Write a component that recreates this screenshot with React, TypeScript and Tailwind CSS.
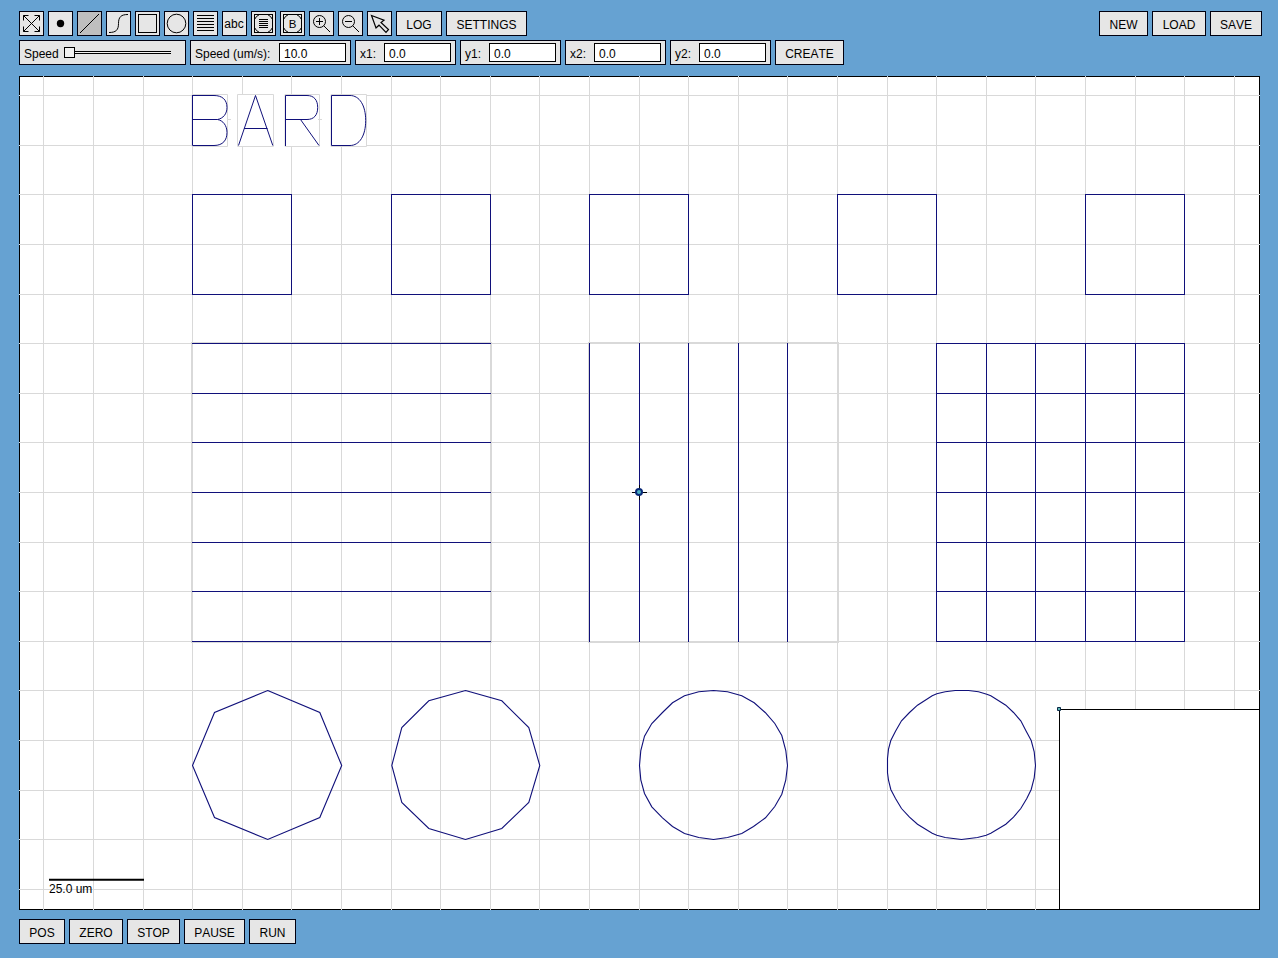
import type { ReactNode } from "react";

const INK = "#10107a";
const GRID = "#d9d9d9";

const gridX = [43, 93, 143, 192, 242, 291, 341, 391, 440, 490, 539, 589, 639, 688, 738, 787, 837, 887, 936, 986, 1035, 1085, 1135, 1184, 1234];
const gridY = [95, 145, 194, 244, 294, 343, 393, 442, 492, 542, 591, 641, 690, 740, 790, 839, 889];

const octagon = "267.7,690.5 319.8,712.5 341.7,765.5 319.8,817.5 267.7,839.5 214.5,817.5 192.5,765.5 214.5,712.5";
const dodecagon = "465.5,690.5 501.8,700.8 528.8,727.5 539.8,765.5 528.8,802.5 501.8,828.5 465.5,839.5 428.8,828.5 401.8,802.5 391.8,765.5 401.8,727.5 428.8,700.8";
const fineCircle = "713.5,690.5 727.5,691.8 741.8,695.8 754.2,702.8 765.2,712.5 774.8,723.5 781.8,735.5 785.8,750.5 787.5,765.5 785.8,779.8 781.8,794.2 774.8,806.5 765.5,817.8 753.5,826.5 741.8,833.5 727.5,837.5 713.5,839.5 698.8,837.5 684.5,833.5 672.5,826.5 662.5,817.8 651.8,806.8 644.5,793.5 640.8,779.8 639.5,765.5 640.8,750.5 644.5,736.2 651.8,723.5 662.5,712.5 672.5,702.8 684.5,695.8 698.8,691.8";
const finestCircle = "955.2,690.5 968.5,690.5 978.5,691.8 986.8,694.2 990.8,695.8 1005.8,705.2 1013.5,712.5 1020.8,720.8 1026.2,731.2 1031.2,740.5 1034.2,751.8 1035.5,765.5 1034.2,777.8 1031.2,789.5 1026.8,798.5 1020.8,808.5 1013.5,817.2 1005.8,824.2 990.8,833.2 986.2,835.2 977.5,837.5 961.5,839.5 945.2,837.5 936.8,835.2 932.2,833.2 917.5,824.2 909.5,817.2 901.5,808.5 895.5,798.5 890.8,789.5 888.5,780.2 887.5,772.8 887.5,758.5 888.5,749.2 890.8,740.5 895.5,731.2 901.5,720.8 909.5,712.5 917.5,705.2 932.2,695.8 936.8,693.8 945.2,691.8";

function Button({ children, width }: { children: ReactNode; width: string }) {
  return (
    <button className={`flex h-[25px] items-center justify-center border border-[#000010] bg-[#e6e6e6] pt-[2px] text-xs leading-none whitespace-nowrap ${width}`}>
      {children}
    </button>
  );
}

function Tool({ children, active = false }: { children: ReactNode; active?: boolean }) {
  return (
    <button className={`h-[25px] w-[25px] border border-[#000010] ${active ? "bg-[#bfbfbf]" : "bg-[#e6e6e6]"}`}>
      <svg className="block" width="23" height="23" viewBox="1 1 23 23" fill="none" stroke="#000" strokeWidth="1">
        {children}
      </svg>
    </button>
  );
}

function Field({ label, value, width }: { label: string; value: string; width: string }) {
  return (
    <label className={`flex h-[25px] items-center justify-between border border-[#000010] bg-[#e6e6e6] px-1 text-xs leading-none ${width}`}>
      <span className="pt-[2px] whitespace-nowrap">{label}</span>
      <span className="flex h-[19px] w-[67px] items-center border border-black bg-white pt-[2px] pl-1">{value}</span>
    </label>
  );
}

function RoundedFrame() {
  return (
    <>
      <rect x="3.5" y="3.5" width="18" height="18" />
      <path d="M3.5 8.5Q5 5 8.5 3.5M16.5 3.5Q20 5 21.5 8.5M21.5 16.5Q20 20 16.5 21.5M8.5 21.5Q5 20 3.5 16.5" />
    </>
  );
}

function Drawing() {
  return (
    <svg className="block" width="1241" height="834" viewBox="19 76 1241 834" fill="none" strokeWidth="1">
      <rect x="19.5" y="76.5" width="1240" height="833" fill="#fff" stroke="#000" />
      <g stroke={GRID}>
        {gridX.map((x) => <path key={x} d={`M${x + 0.5} 76V910`} />)}
        {gridY.map((y) => <path key={y} d={`M19 ${y + 0.5}H1260`} />)}
        <path d="M192 94h175v53H192z" fill="#fff" stroke="none" />
        <path d="M192 94.5h35.5v52H192zM237.5 94.5h36v52h-36zM285 94.5h34.5v52H285zM331 94.5h35.5v52H331zM227 119.5h4M318 119.5h4" />
        <path d="M192 343h299v299H192zM589 343h249v299H589z" strokeWidth="2" />
      </g>
      <g stroke={INK}>
        <path d="M192.5 95.5V145.5H214C223 145.5 227 140 227 132.5C227 125.500 223 120.500 217.500 119.500H192.500M217.500 119.500C223 118.500 227 114 227 107.500C227 99.500 222 95.500 214 95.500H192" />
        <path d="M238.5 145.5L255.500 95.500L272.800 145.500M244 128.500H267.500" />
        <path d="M285.5 146V95.500H307C314 95.500 317.700 100 317.700 107.500C317.700 115 314 119.500 307 119.500H285.500M300.500 119.500L319 145.500" />
        <path d="M331.5 95.500H350C359.500 95.500 365.700 105.500 365.700 120.500S359.500 145.500 350 145.500H331.500z" />
        {[192, 391, 589, 837, 1085].map((x) => <rect key={x} x={x + 0.5} y="194.5" width="99" height="100" />)}
        {[343, 393, 442, 492, 542, 591, 641].map((y) => <path key={y} d={`M192 ${y + 0.5}H491M936 ${y + 0.5}H1185`} />)}
        {[589, 639, 688, 738, 787, 936, 986, 1035, 1085, 1135, 1184].map((x) => <path key={x} d={`M${x + 0.5} 343V642`} />)}
        <g strokeWidth="1.1">
          <polygon points={octagon} />
          <polygon points={dodecagon} />
          <polygon points={fineCircle} />
          <polygon points={finestCircle} />
        </g>
      </g>
      <path d="M632 492.5H647M639.5 485V500" stroke="#000" />
      <circle cx="639" cy="492" r="3" fill="#4bb3c4" stroke="#0b2a78" strokeWidth="2" />
      <path d="M49 879.7H144" stroke="#000" strokeWidth="2" />
      <text x="49" y="893" fill="#000" className="text-xs">25.0 um</text>
      <rect x="1059.5" y="709.5" width="200" height="200" fill="#fff" stroke="#000" />
      <path d="M1057.5 707.5h3v3h-3z" fill="#5cb3b3" stroke="#0b2a48" />
    </svg>
  );
}

export default function App() {
  return (
    <main className="flex h-[958px] w-[1278px] flex-col overflow-hidden bg-[#66a2d2] pt-[11px] pr-4 pl-[19px] font-['Liberation_Sans',sans-serif] text-black [font-kerning:none]">
      <header className="flex justify-between">
        <div className="flex gap-1">
          <Tool><path d="M4.5 4.5L20.5 20.5M20.5 4.5L4.5 20.5M4.5 9.5V4.5H9.5M15.5 4.5H20.5V9.5M20.5 15.5V20.5H15.5M9.5 20.5H4.5V15.5" /></Tool>
          <Tool><circle cx="12.5" cy="12.5" r="3.7" fill="#000" stroke="none" /></Tool>
          <Tool active><path d="M3 22L22 3" /></Tool>
          <Tool><path d="M3 21.5C10 21.5 12.5 19 12.5 12.5S15 3.5 22 3.5" /></Tool>
          <Tool><rect x="3.5" y="3.5" width="18" height="18" /></Tool>
          <Tool><circle cx="12.5" cy="12.5" r="9.3" /></Tool>
          <Tool><path d="M4 4.5H21M4 7.5H21M4 10.5H21M4 13.5H21M4 16.5H21M4 19.5H21" /></Tool>
          <Tool><text x="12" y="17" fill="#000" stroke="none" textAnchor="middle" className="text-xs">abc</text></Tool>
          <Tool><RoundedFrame /><path d="M8 8.5H17M8 10.5H17M8 12.5H17M8 14.5H17M8 16.5H17" /></Tool>
          <Tool><RoundedFrame /><text x="12.7" y="17" fill="#000" stroke="none" textAnchor="middle" className="text-[11.5px]">B</text></Tool>
          <Tool><circle cx="10.5" cy="10.5" r="6" /><path d="M7 10.5H14M10.5 7V14M14.7 14.7L21 21" /></Tool>
          <Tool><circle cx="10.5" cy="10.5" r="6" /><path d="M7 10.5H14M14.7 14.7L21 21" /></Tool>
          <Tool><path d="M4.5 4.500L17 9.200L14 11.500L21.500 18.500L19 21.300L12 14.200L9 17Z" strokeWidth="1.2" /></Tool>
          <Button width="w-[46px]">LOG</Button>
          <Button width="w-[81px]">SETTINGS</Button>
        </div>
        <div className="flex gap-1">
          <Button width="w-[49px]">NEW</Button>
          <Button width="w-[54px]">LOAD</Button>
          <Button width="w-[52px]">SAVE</Button>
        </div>
      </header>
      <section className="mt-1 flex gap-1">
        <label className="flex h-[25px] w-[167px] items-center border border-[#000010] bg-[#e6e6e6] pl-1 text-xs leading-none">
          <span className="w-10 pt-[2px]">Speed</span>
          <span className="flex items-center">
            <span className="h-[11px] w-[11px] border border-black bg-[#f2f2f2]" />
            <span className="h-[3px] w-24 border-y border-black bg-[#f2f2f2]" />
          </span>
        </label>
        <Field label="Speed (um/s):" value="10.0" width="w-[161px]" />
        <Field label="x1:" value="0.0" width="w-[101px]" />
        <Field label="y1:" value="0.0" width="w-[101px]" />
        <Field label="x2:" value="0.0" width="w-[101px]" />
        <Field label="y2:" value="0.0" width="w-[101px]" />
        <Button width="w-[69px]">CREATE</Button>
      </section>
      <section className="mt-[11px]">
        <Drawing />
      </section>
      <footer className="mt-[9px] flex gap-1">
        <Button width="w-[46px]">POS</Button>
        <Button width="w-[54px]">ZERO</Button>
        <Button width="w-[53px]">STOP</Button>
        <Button width="w-[61px]">PAUSE</Button>
        <Button width="w-[47px]">RUN</Button>
      </footer>
    </main>
  );
}
